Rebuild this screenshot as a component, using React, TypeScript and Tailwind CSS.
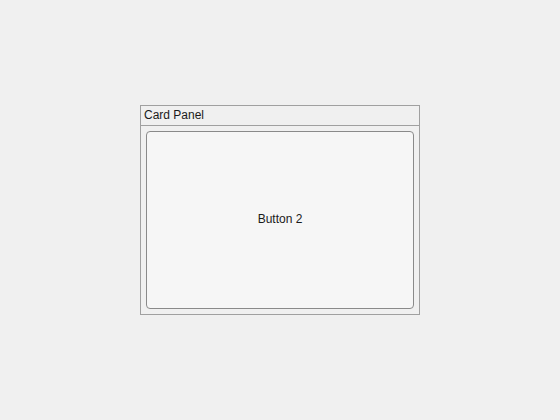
export default function App() {
  return (
    <div className="w-[560px] h-[420px] bg-[#f0f0f0] flex items-center justify-center" style={{ fontFamily: '"Liberation Sans", Arial, sans-serif' }}>
      <div className="w-[280px] h-[210px] border border-[#a0a0a0] flex flex-col">
        <div className="h-[20px] border-b border-[#a0a0a0] flex items-center px-[3px] pb-[2px] text-[12px] text-[#1a1a1a]">
          Card Panel
        </div>
        <div className="flex-1 p-[5px] flex">
          <button className="flex-1 rounded-[4px] border border-[#8a8a8a] bg-[#f6f6f6] pb-[2px] text-[12px] text-[#1a1a1a] flex items-center justify-center">
            Button 2
          </button>
        </div>
      </div>
    </div>
  );
}
